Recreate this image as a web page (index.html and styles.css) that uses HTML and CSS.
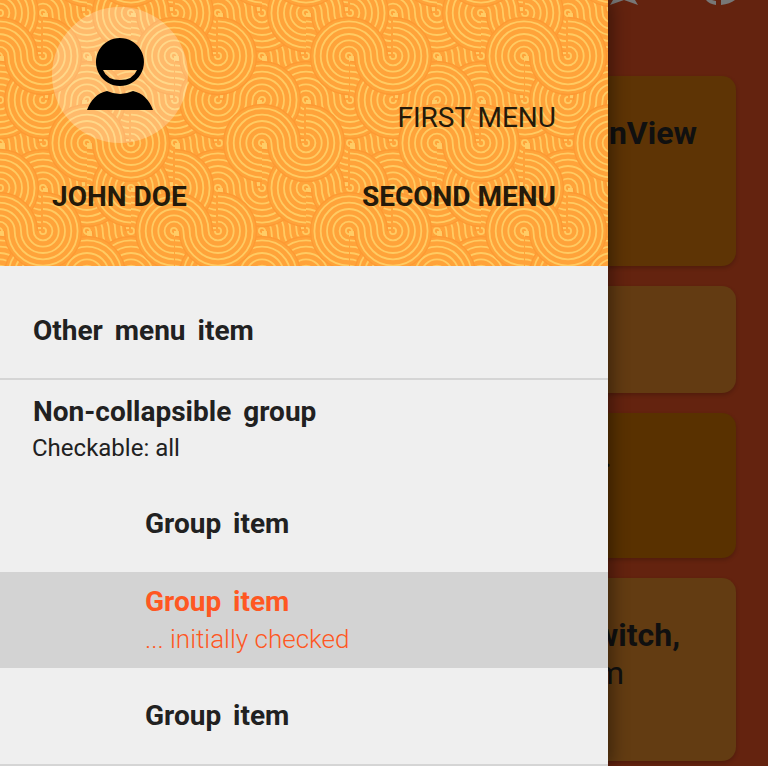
FILE: index.html
```html
<!DOCTYPE html>
<html>
<head>
  <title>Navigation drawer</title>
  <meta name="viewport" content="width=device-width, initial-scale=1.0" />
  <link rel="stylesheet" href="styles.css">
</head>
<body>
  <main class="content">
    <div class="top-icons">
      <svg class="top-icon" width="28" height="6" viewBox="0 0 28 6"><path class="grey" d="M3 0 L0 5 L14 0 L28 5 L25 0 Z"/></svg>
      <svg class="top-icon" width="30" height="6" viewBox="0 0 30 6"><path class="grey" d="M0 0 Q3 4 10 5 L10 1 L6 0 Z M15 0 L15 5 Q24 4 29 0 Z"/></svg>
    </div>
    <section class="card card-a"><h3 class="card-title title-a">nView</h3></section>
    <section class="card card-b"></section>
    <section class="card card-c"><span class="card-dot">.</span></section>
    <section class="card card-d">
      <h3 class="card-title title-d">witch,</h3>
      <p class="card-text">m</p>
    </section>
  </main>

  <aside class="drawer">
    <header class="drawer-head">
      <svg class="swirls" width="608" height="266" viewBox="0 0 608 266">
        <defs>
          <g id="swirl">
            <path class="band" d="M44 44 L44 82.5 A38.5 38.5 0 1 1 82.5 44 Z"/>
            <path class="band" d="M86 42 L49.5 44 A38.5 38.5 0 1 0 88 5.5 L86 5.5 Z"/>
            <path class="edge" d="M44 82.5 A38.5 38.5 0 1 1 82.5 44"/>
            <path class="edge" d="M49.5 44 A38.5 38.5 0 1 0 88 5.5"/>
            <path class="ring" d="M44 47.1 A3.1 3.1 0 1 1 47.1 44 M44 53.4 A9.4 9.4 0 1 1 53.4 44 M44 59.7 A15.7 15.7 0 1 1 59.7 44 M44 66 A22 22 0 1 1 66 44 M44 72.3 A28.3 28.3 0 1 1 72.3 44 M44 78.6 A34.6 34.6 0 1 1 78.6 44"/>
            <path class="ring" d="M84.9 44 A3.1 3.1 0 1 0 88 40.9 M78.6 44 A9.4 9.4 0 1 0 88 34.6 M72.3 44 A15.7 15.7 0 1 0 88 28.3 M66 44 A22 22 0 1 0 88 22 M59.7 44 A28.3 28.3 0 1 0 88 15.7 M53.4 44 A34.6 34.6 0 1 0 88 9.4"/>
          </g>
          <!-- back row -->
          <pattern id="s5" width="175" height="175" x="43" y="12" patternUnits="userSpaceOnUse"><use href="#swirl"/></pattern>
          <pattern id="s6" width="175" height="175" x="-44" y="99" patternUnits="userSpaceOnUse"><use href="#swirl"/></pattern>
          <!-- middle rows, s4 is drawn mirrored -->
          <pattern id="s1" width="175" height="175" x="-1" y="-31" patternUnits="userSpaceOnUse"><use href="#swirl"/></pattern>
          <pattern id="s2" width="175" height="175" x="87" y="-31" patternUnits="userSpaceOnUse"><use href="#swirl"/></pattern>
          <pattern id="s3" width="175" height="175" x="87" y="56" patternUnits="userSpaceOnUse"><use href="#swirl"/></pattern>
          <pattern id="s4" width="175" height="175" x="-131" y="56" patternUnits="userSpaceOnUse"><use href="#swirl"/></pattern>
          <!-- front row -->
          <pattern id="s7" width="175" height="175" x="43" y="99" patternUnits="userSpaceOnUse"><use href="#swirl"/></pattern>
          <pattern id="s8" width="175" height="175" x="-45" y="12" patternUnits="userSpaceOnUse"><use href="#swirl"/></pattern>
        </defs>
        <rect class="swirl-base" width="608" height="266"/>
        <rect width="608" height="266" fill="url(#s5)"/>
        <rect width="608" height="266" fill="url(#s6)"/>
        <rect width="608" height="266" fill="url(#s1)"/>
        <rect width="608" height="266" fill="url(#s2)"/>
        <rect width="608" height="266" fill="url(#s3)"/>
        <rect x="-608" width="608" height="266" transform="scale(-1,1)" fill="url(#s4)"/>
        <rect width="608" height="266" fill="url(#s7)"/>
        <rect width="608" height="266" fill="url(#s8)"/>
      </svg>
      <div class="head-columns">
        <div class="account">
          <div class="avatar">
            <svg width="68" height="74" viewBox="0 0 68 74">
              <path fill-rule="evenodd" d="M34 1 A24 24 0 1 1 33.9 1 Z M17 33 L51 33 Q47 43 34 43 Q21 43 17 33 Z"/>
              <path d="M1 73 Q7 57 21 54 Q34 60 47 54 Q61 57 67 73 Z"/>
            </svg>
          </div>
          <div class="account-name">JOHN DOE</div>
        </div>
        <nav class="head-menu">
          <a class="head-link">FIRST MENU</a>
          <a class="head-link head-link-active">SECOND MENU</a>
        </nav>
      </div>
    </header>

    <ul class="menu">
      <li class="row row-plain"><span class="row-title">Other menu item</span></li>
      <li class="row row-plain row-ruled">
        <span class="row-title">Non-collapsible group</span>
        <span class="row-note">Checkable: all</span>
      </li>
      <li class="row"><span class="row-title">Group item</span></li>
      <li class="row row-checked">
        <span class="row-title">Group item</span>
        <span class="row-hint">... initially checked</span>
      </li>
      <li class="row row-last"><span class="row-title">Group item</span></li>
    </ul>
  </aside>
</body>
</html>
```

FILE: styles.css
```css
html, body {
  height: 766px;
  overflow: hidden;
}
body {
  margin: 0;
  font-family: Roboto, sans-serif;
  background-color: #64230f;
  color: #101010;
}
.content {
  padding: 0 32px;
}
.top-icons {
  display: flex;
  justify-content: flex-end;
  gap: 68px;
  height: 76px;
}
.top-icon {
  display: block;
}
.grey {
  fill: #777;
}
.card {
  border-radius: 14px;
  box-shadow: 0 2px 4px rgba(0,0,0,0.2);
  margin-bottom: 20px;
  text-align: right;
  box-sizing: border-box;
}
.card-a {
  height: 190px;
  background-color: #5e3405;
  padding: 38px 39px 0 0;
}
.card-b {
  height: 107px;
  background-color: #633b12;
}
.card-c {
  height: 145px;
  background-color: #593100;
  padding: 24px 124px 0 0;
}
.card-d {
  height: 183px;
  background-color: #633c12;
  padding: 38px 56px 0 0;
}
.card-title {
  margin: 0;
  font-size: 32px;
  line-height: 38px;
  font-weight: 700;
}
.card-text {
  margin: 0;
  font-size: 32px;
  line-height: 38px;
  padding-right: 56px;
}
.card-dot {
  font-size: 32px;
}
.drawer {
  position: absolute;
  left: 0;
  top: 0;
  width: 608px;
  height: 766px;
  background-color: #efefef;
  box-shadow: 4px 0 16px rgba(0,0,0,0.4);
  overflow: hidden;
}
.drawer-head {
  position: relative;
  height: 266px;
  color: #241a0a;
}
.swirls {
  position: absolute;
  left: 0;
  top: 0;
}
.swirl-base {
  fill: #ffcc66;
}
.band {
  fill: #ffa33a;
}
.edge {
  fill: none;
  stroke: #fd9a33;
  stroke-width: 1.4;
}
.ring {
  fill: none;
  stroke: #ffcb62;
  stroke-width: 1.8;
}
.head-columns {
  position: relative;
  display: flex;
  justify-content: space-between;
  padding: 7px 52px 0;
}
.account {
  width: 136px;
}
.avatar {
  width: 136px;
  height: 136px;
  border-radius: 50%;
  background-color: rgba(255,255,255,0.25);
  display: flex;
  justify-content: center;
  padding-top: 30px;
  box-sizing: border-box;
}
.account-name {
  margin-top: 38px;
  font-size: 28px;
  line-height: 32px;
  font-weight: 700;
  white-space: nowrap;
}
.head-menu {
  display: flex;
  flex-direction: column;
  align-items: flex-end;
  padding-top: 95px;
  gap: 47px;
  font-size: 28px;
  line-height: 32px;
}
.head-link-active {
  font-weight: 700;
}
.menu {
  list-style: none;
  margin: 0;
  padding: 16px 0 0;
}
.row {
  height: 96px;
  box-sizing: border-box;
  padding-left: 145px;
  display: flex;
  flex-direction: column;
  justify-content: center;
  color: #212121;
}
.row-plain {
  padding-left: 33px;
  padding-top: 2px;
}
.row-ruled {
  border-top: 2px solid #d5d5d5;
  height: 98px;
}
.row-checked {
  background-color: #d3d3d3;
  color: #ff5722;
}
.row-last {
  border-bottom: 2px solid #d5d5d5;
  height: 98px;
}
.row-title {
  font-size: 28px;
  line-height: 36px;
  font-weight: 700;
  word-spacing: 5px;
  white-space: nowrap;
}
.row-note {
  font-size: 24px;
  line-height: 32px;
  margin-left: -1px;
  margin-top: 2px;
}
.row-hint {
  font-weight: 300;
  font-size: 26px;
  line-height: 34px;
  margin-top: 2px;
  white-space: nowrap;
}
```
